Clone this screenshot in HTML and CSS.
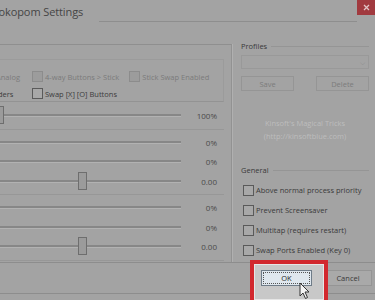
FILE: index.html
```html
<!DOCTYPE html>
<html lang="en">
  <head>
    <meta charset="UTF-8" />
    <meta name="viewport" content="width=device-width, initial-scale=1.0" />
    <title>Pokopom Settings</title>
    <link rel="stylesheet" href="styles.css">
  </head>
  <body>
    <div class="window">
      <div class="titlebar">
        <span class="title">Pokopom Settings</span>
        <span class="title-fill"></span>
        <div class="close-btn">
          <svg width="7" height="7" viewBox="0 0 7 7">
            <path d="M1 1 L6 6 M6 1 L1 6" stroke="#e2c4c5" stroke-width="1.3" />
          </svg>
        </div>
      </div>

      <div class="content">
        <div class="left">
          <div class="options">
            <div class="opt-row">
              <span class="opt disabled cut-a">Analog</span>
              <label class="opt disabled"><span class="box"></span>4-way Buttons &gt; Stick</label>
              <label class="opt disabled"><span class="box"></span>Stick Swap Enabled</label>
            </div>
            <div class="opt-row">
              <span class="opt cut-b">Sliders</span>
              <label class="opt"><span class="box"></span>Swap [X] [O] Buttons</label>
            </div>
          </div>

          <div class="group first">
            <div class="slider-row">
              <div class="track"><span class="thumb thumb-start"></span></div>
              <span class="value">100%</span>
            </div>
          </div>

          <div class="group">
            <div class="slider-row">
              <div class="track"></div>
              <span class="value">0%</span>
            </div>
            <div class="slider-row">
              <div class="track"></div>
              <span class="value">0%</span>
            </div>
            <div class="slider-row">
              <div class="track"><span class="thumb thumb-mid"></span></div>
              <span class="value">0.00</span>
            </div>
          </div>

          <div class="group">
            <div class="slider-row">
              <div class="track"></div>
              <span class="value">0%</span>
            </div>
            <div class="slider-row">
              <div class="track"></div>
              <span class="value">0%</span>
            </div>
            <div class="slider-row">
              <div class="track"><span class="thumb thumb-mid"></span></div>
              <span class="value">0.00</span>
            </div>
          </div>
        </div>

        <div class="right">
          <div class="legend"><span>Profiles</span><span class="legend-line"></span></div>
          <div class="combo"><span class="arrow">&#x2335;</span></div>
          <div class="profile-buttons">
            <span class="btn disabled">Save</span>
            <span class="btn disabled">Delete</span>
          </div>

          <div class="credits">
            <div>Kinsoft's Magical Tricks</div>
            <div>(http://kinsoftblue.com)</div>
          </div>

          <div class="legend general"><span>General</span><span class="legend-line"></span></div>
          <div class="checks">
            <label class="check"><span class="box"></span>Above normal process priority</label>
            <label class="check"><span class="box"></span>Prevent Screensaver</label>
            <label class="check"><span class="box"></span>Multitap (requires restart)</label>
            <label class="check"><span class="box"></span>Swap Ports Enabled (Key 0)</label>
          </div>
        </div>
      </div>

      <div class="footer">
        <div class="highlight">
          <span class="btn ok">OK</span>
          <svg class="cursor" width="12" height="18" viewBox="0 0 12 18">
            <path d="M1 1 L1 14 L4 11 L6.5 16.5 L8.5 15.5 L6 10 L10 10 Z" fill="#f4f4f4" stroke="#333" stroke-width="1" stroke-linejoin="round" />
          </svg>
        </div>
        <span class="btn cancel">Cancel</span>
      </div>
    </div>
  </body>
</html>
```

FILE: styles.css
```css
body {
  margin: 0;
  background: #a3a3a3;
  font-family: "Open Sans", "Liberation Sans", sans-serif;
  color: #3c3c3c;
}

.window {
  width: 375px;
  height: 300px;
  overflow: hidden;
  background: #a3a3a3;
  position: relative;
}

.titlebar {
  display: flex;
  align-items: flex-start;
  height: 22px;
}

.title {
  font-size: 11px;
  line-height: 24px;
  margin-left: -8px;
  color: #454545;
  letter-spacing: -0.1px;
  white-space: nowrap;
}

.title-fill {
  flex: 1;
  align-self: stretch;
  margin-left: 16px;
  border-bottom: 1px solid #8e8e8e;
}

.close-btn {
  flex: none;
  width: 18px;
  height: 15px;
  background-color: #a13a3f;
  display: flex;
  justify-content: center;
  align-items: center;
}

.content {
  display: flex;
  padding-top: 22px;
  height: 218px;
}

.left {
  width: 231px;
  border-top: 1px solid #8f8f8f;
  border-right: 1px solid #929292;
  box-shadow: 1px 0 0 #b0b0b0;
}

.options {
  margin-top: 14px;
  margin-right: 7px;
  height: 43px;
  border-top: 1px solid #9b9b9b;
  border-right: 1px solid #9b9b9b;
  border-bottom: 1px solid #939393;
  padding-top: 8px;
  box-sizing: border-box;
}

.opt-row {
  display: flex;
  align-items: center;
  height: 17px;
  font-size: 7.5px;
}

.opt {
  display: flex;
  align-items: center;
  white-space: nowrap;
}

.opt.disabled {
  color: #7b7b7b;
}

.opt .box {
  margin-right: 2px;
}

.cut-a {
  margin-left: -4px;
  width: 36px;
}

.cut-b {
  margin-left: -10px;
  width: 42px;
}

.opt-row .opt + .opt {
  margin-right: 10px;
}

.box {
  width: 9px;
  height: 9px;
  border: 1px solid #5a5a5a;
  background: #a8a8a8;
  display: inline-block;
  flex: none;
}

.disabled .box {
  border-color: #8c8c8c;
  background: #9c9c9c;
}

.group {
  margin-right: 7px;
  border-bottom: 1px solid #979797;
  padding: 3px 0 3px;
}

.group.first {
  padding-top: 4px;
}

.slider-row {
  display: flex;
  align-items: center;
  height: 19.5px;
}

.track {
  width: 181px;
  height: 2px;
  background: #878787;
  border-bottom: 1px solid #b2b2b2;
  position: relative;
}

.thumb {
  position: absolute;
  top: -8px;
  width: 7px;
  height: 16px;
  border: 1px solid #6e6e6e;
  background: #9b9b9b;
}

.thumb-start {
  left: -5px;
}

.thumb-mid {
  left: 78px;
}

.value {
  width: 36px;
  text-align: right;
  font-size: 8px;
  color: #4a4a4a;
}

.right {
  width: 128px;
  margin-left: 9px;
  margin-top: -4px;
  font-size: 7.5px;
}

.legend {
  display: flex;
  align-items: center;
  height: 12px;
  color: #3a3a3a;
}

.legend-line {
  flex: 1;
  margin-left: 4px;
  border-top: 1px solid #959595;
}

.general {
  margin-top: 2px;
}

.combo {
  margin-top: 3px;
  height: 12px;
  border: 1px solid #999;
  display: flex;
  justify-content: flex-end;
  align-items: center;
}

.arrow {
  color: #777;
  font-size: 7px;
  margin-right: 3px;
}

.profile-buttons {
  display: flex;
  justify-content: space-between;
  margin-top: 7px;
}

.btn {
  display: inline-flex;
  justify-content: center;
  align-items: center;
  height: 15px;
  width: 53px;
  border: 1px solid #959595;
  box-sizing: border-box;
  font-size: 7.5px;
}

.btn.disabled {
  color: #7c7c7c;
}

.credits {
  margin-top: 26px;
  text-align: center;
  color: #bdbdbd;
  line-height: 13px;
  height: 45px;
}

.checks {
  margin-top: 4px;
}

.check {
  display: flex;
  align-items: center;
  height: 20px;
  margin-left: 2px;
  color: #3a3a3a;
}

.check .box {
  margin-right: 2px;
}

.footer {
  display: flex;
  justify-content: flex-end;
  align-items: flex-start;
  height: 30px;
  border-top: 1px solid #8d8d8d;
  border-bottom: 1px solid #8d8d8d;
  padding-right: 3px;
}

.highlight {
  display: flex;
  align-items: flex-start;
  position: relative;
  z-index: 1;
  margin-top: -3px;
  width: 78px;
  height: 44px;
  box-sizing: border-box;
  border: 4px solid #d2282e;
  background: #c8c8c8;
  box-shadow: inset 0 0 0 1px #e6e6e6;
  padding: 6px 0 0 7px;
}

.ok {
  width: 51px;
  height: 16px;
  background: #dfe7ee;
  border: 1px solid #6f7c88;
  outline: 1px dotted #555;
  outline-offset: -3px;
  color: #2a2a2a;
}

.cursor {
  position: absolute;
  left: 45px;
  top: 18px;
}

.cancel {
  margin-left: -4px;
  margin-top: 7px;
  width: 48px;
  height: 16px;
  background: #a9a9a9;
  color: #3a3a3a;
}
```
